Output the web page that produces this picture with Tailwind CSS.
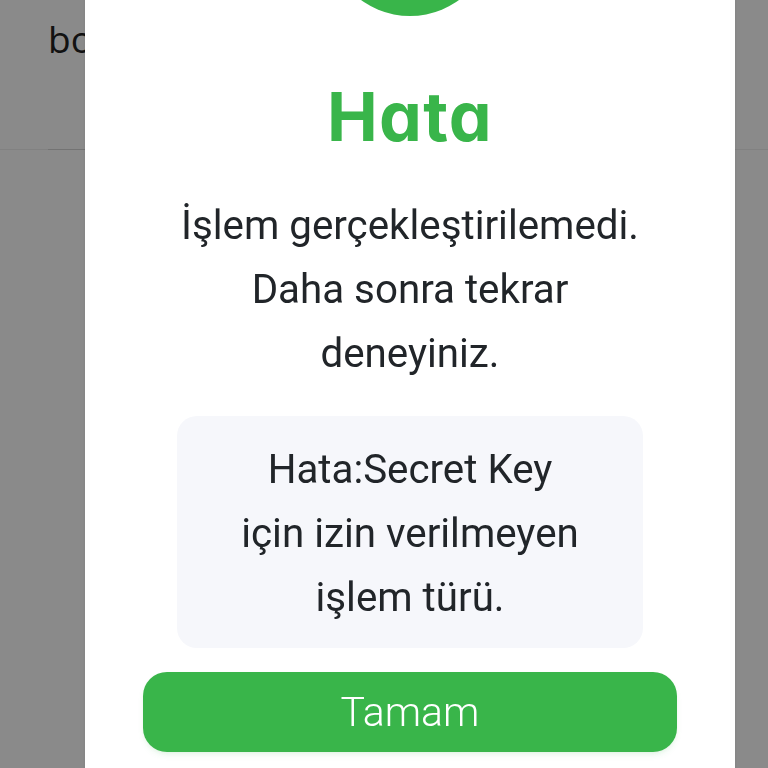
<!DOCTYPE html>
<html lang="tr">

<head>
    <meta charset="UTF-8">
    <meta name="viewport" content="width=device-width, initial-scale=1.0">
    <title>Hata</title>
    <script src="https://cdn.jsdelivr.net/npm/@tailwindcss/browser@4"></script>
</head>

<body class="bg-white overflow-hidden font-['Roboto',sans-serif]">
    <div class="h-[768px] overflow-hidden">
        <!-- Page behind the dialog -->
        <div class="h-[150px] pl-[48px] pt-[14px] border-b border-[#eeeeee]">
            <div class="w-[200px] text-[37px] leading-[50px] text-[#222] font-['Open_Sans',sans-serif]">bonus</div>
        </div>
        <div class="ml-[48px] w-[620px] h-px -mt-px bg-[#d4d4d4]"></div>

        <!-- Overlay -->
        <div class="fixed inset-0 bg-black/46 pl-[85px] overflow-hidden">
            <div class="w-[650px] h-[1000px] -mt-[150px] bg-white flex flex-col items-center shadow-sm">
                <div class="w-[166px] h-[166px] shrink-0 rounded-full bg-[#39b54a]"></div>
                <h1 class="mt-[60px] text-[68px] leading-[80px] tracking-[0.02em] font-bold text-[#39b54a] font-['Inter',sans-serif] [font-feature-settings:'cv11']">Hata</h1>
                <p class="mt-[38px] text-[40.3px] leading-[64px] text-[#212529] text-center font-[370]">İşlem gerçekleştirilemedi.<br>Daha sonra tekrar<br>deneyiniz.</p>
                <div class="mt-[30px] w-[466px] h-[232px] pt-[3px] rounded-[20px] bg-[#f6f7fb] flex items-center justify-center">
                    <p class="text-[40.3px] leading-[64px] text-[#212529] text-center font-[370]">Hata:Secret Key<br>için izin verilmeyen<br>işlem türü.</p>
                </div>
                <button class="mt-[24px] w-[534px] h-[80px] pt-[1px] shrink-0 rounded-[24px] bg-[#39b54a] text-white text-[41px] font-light shadow-md shadow-[#39b54a]/10">Tamam</button>
            </div>
        </div>
    </div>
</body>

</html>
